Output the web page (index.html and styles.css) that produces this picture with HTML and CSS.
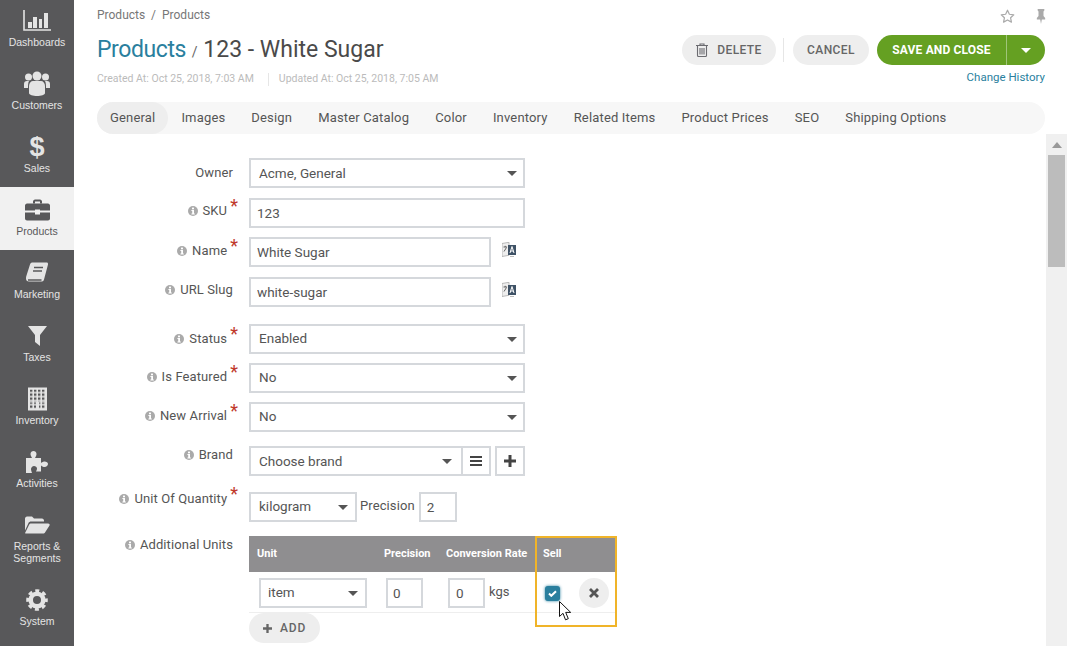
FILE: index.html
```html
<!DOCTYPE html>
<html lang="en">
<head>
  <meta charset="UTF-8" />
  <meta name="viewport" content="width=device-width, initial-scale=1.0"/>
  <title>Products - White Sugar</title>
  <link rel="stylesheet" href="styles.css">
</head>
<body>
  <svg class="defs" width="0" height="0">
    <symbol id="info" viewBox="0 0 10 10">
      <circle cx="5" cy="5" r="5" fill="#aaa"/>
      <rect x="4" y="1.6" width="2" height="1.7" fill="#fff"/>
      <path d="M3.4 4h2.6v3.6h.8v1H3.4v-1h.8V5h-.8z" fill="#fff"/>
    </symbol>
    <symbol id="translate" viewBox="0 0 14 15">
      <path d="M0 1.500l7-1.200v13l-7 1.200z" fill="#eee" stroke="#aaa" stroke-width=".8"/>
      <path d="M6 3h8v10H6z" fill="#3f5266"/>
      <path d="M8 11l2-6.500 2 6.500M8.800 9h2.400" fill="none" stroke="#fff"/>
      <path d="M1.500 5h3.500M3.200 3.800v1.200M2 9.500l2.500-4" fill="none" stroke="#555" stroke-width=".9"/>
      <path d="M8 14.500h4" stroke="#bbb"/>
    </symbol>
    <pattern id="windows" width="4" height="4" patternUnits="userSpaceOnUse" x="2" y="2">
      <rect width="2.400" height="2.400" fill="#58585a"/>
    </pattern>
  </svg>

  <nav class="sidebar">
    <a class="nav-item">
      <svg class="nav-icon" width="30" height="22" viewBox="0 0 30 22"><path d="M2 0v20h27" fill="none" stroke="currentColor" stroke-width="1.600"/><path d="M6 12h4v6H6zM11 7h4v11h-4zM17 9h3v9h-3zM22 3h4v15h-4z" fill="currentColor"/></svg>
      <span>Dashboards</span>
    </a>
    <a class="nav-item">
      <svg class="nav-icon" width="26" height="26" viewBox="0 0 26 26"><g fill="currentColor"><circle cx="4.500" cy="6" r="3.500"/><circle cx="13" cy="5" r="4.500"/><circle cx="21.500" cy="6" r="3.500"/><path d="M0 17v-4c0-2 1-3 3-3h2c-1 2-1 4-1 7zM26 17v-4c0-2-1-3-3-3h-2c1 2 1 4 1 7z"/><path d="M5 22v-7c0-3 2-5 4-5h8c2 0 4 2 4 5v7c0 2-4 3-8 3s-8-1-8-3z"/></g></svg>
      <span>Customers</span>
    </a>
    <a class="nav-item">
      <span class="nav-icon dollar">$</span>
      <span>Sales</span>
    </a>
    <a class="nav-item active">
      <svg class="nav-icon" width="25" height="21" viewBox="0 0 25 21"><g fill="currentColor"><path d="M8 4V2c0-1 1-2 2-2h5c1 0 2 1 2 2v2h-2V2h-5v2z"/><path d="M2 4h21c1 0 2 1 2 2v5H15v-1h-5v1H0V6c0-1 1-2 2-2z"/><path d="M0 13h10v2h5v-2h10v6c0 1-1 2-2 2H2c-1 0-2-1-2-2z"/></g></svg>
      <span>Products</span>
    </a>
    <a class="nav-item">
      <svg class="nav-icon" width="22" height="21" viewBox="0 0 22 21"><path d="M6 0h15c1 0 1 1 1 2l-4 15c-.3 1-1 2-2 2H3c-2 0-3-1-3-3 0-1 0-2 .5-3L4 2C4.300 1 5 0 6 0z" fill="currentColor"/><path d="M2 17.500h13.500M8 5h9M7 8.500h9" fill="none" stroke="#58585a" stroke-width="1.300"/></svg>
      <span>Marketing</span>
    </a>
    <a class="nav-item">
      <svg class="nav-icon" width="19" height="20" viewBox="0 0 19 20"><path d="M0 0h19l-7 9v11l-5-4V9z" fill="currentColor"/></svg>
      <span>Taxes</span>
    </a>
    <a class="nav-item">
      <svg class="nav-icon" width="19" height="23" viewBox="0 0 19 23"><rect width="19" height="23" fill="currentColor"/><rect x="2" y="2" width="15" height="12" fill="url(#windows)"/><path d="M2 15h6v6H2zM11 15h6v6h-6z" fill="url(#windows)"/></svg>
      <span>Inventory</span>
    </a>
    <a class="nav-item">
      <svg class="nav-icon" width="22" height="22" viewBox="0 0 22 22"><path d="M0 7h6C5 5 4.500 4 4.500 3 4.500 1 6 0 7.500 0S10.500 1 10.500 3c0 1-.5 2-1.500 4h6v5c1.500-1 2.500-1.500 3.500-1.500 2 0 3.500 1 3.500 2.500s-1.500 3-3.500 3c-1 0-2-.5-3.500-1.500v6H10c.8-1.500 1-2.300 1-3 0-1.500-1.500-2.500-3-2.500S5 16.500 5 18c0 .7.2 1.500 1 4H0z" fill="currentColor"/></svg>
      <span>Activities</span>
    </a>
    <a class="nav-item">
      <svg class="nav-icon" width="25" height="17" viewBox="0 0 25 17"><path d="M0 14V2C0 1 1 0 2 0h5l2 2h8c1 0 2 1 2 2v1H6C5 5 4 5.500 3.500 6.500z" fill="currentColor"/><path d="M6 7h17c1.500 0 2 1 1.500 2L20 16c-.4.600-1 1-2 1H1c-1 0-1-.5-.7-1L4 8.500C4.500 7.500 5 7 6 7z" fill="currentColor"/></svg>
      <span>Reports &amp; Segments</span>
    </a>
    <a class="nav-item">
      <svg class="nav-icon" width="22" height="22" viewBox="0 0 22 22"><g fill="none" stroke="currentColor"><circle cx="11" cy="11" r="6.300" stroke-width="4.600"/><circle cx="11" cy="11" r="9.300" stroke-width="3" stroke-dasharray="4 3.300" stroke-dashoffset="2"/></g></svg>
      <span>System</span>
    </a>
  </nav>

  <main class="main">
    <header class="page-head">
      <div class="head-left">
        <div class="breadcrumbs">Products &nbsp;/&nbsp; Products</div>
        <h1 class="title"><a>Products</a> <small>/</small> 123 - White Sugar</h1>
        <div class="meta">
          <span>Created At: Oct 25, 2018, 7:03 AM</span>
          <span class="meta-sep"></span>
          <span>Updated At: Oct 25, 2018, 7:05 AM</span>
        </div>
      </div>
      <div class="head-right">
        <div class="head-icons">
          <svg width="15" height="15" viewBox="0 0 16 16"><path d="M8 1.300l2 4.300 4.700.6-3.400 3.200.9 4.600L8 11.700l-4.200 2.300.9-4.600L1.300 6.200 6 5.600z" fill="none" stroke="#aaa" stroke-width="1.300" stroke-linejoin="round"/></svg>
          <svg width="10" height="15" viewBox="0 0 12 15" preserveAspectRatio="none"><path d="M2 0h8v1.500L9 2.500V7l2 2v1.500H7L6 15l-1-4.500H1V9l2-2V2.500L2 1.500z" fill="#aaa"/></svg>
        </div>
        <div class="actions">
          <button class="btn btn-delete">
            <svg width="12" height="14" viewBox="0 0 12 14"><path d="M4 2V1h4v1M0 2.500h12M1.500 3v9.500c0 .5.500 1 1 1h7c.5 0 1-.5 1-1V3M4 5v6.500M6 5v6.500M8 5v6.500" fill="none" stroke="#6b6b70" stroke-width="1.100"/></svg>
            DELETE
          </button>
          <span class="actions-sep"></span>
          <button class="btn btn-cancel">CANCEL</button>
          <div class="btn-split">
            <button class="btn btn-save">SAVE AND CLOSE</button>
            <button class="btn btn-more"><i class="caret caret-white"></i></button>
          </div>
        </div>
        <a class="history">Change History</a>
      </div>
    </header>

    <div class="tabs-wrap">
      <ul class="tabs">
        <li class="active">General</li>
        <li>Images</li>
        <li>Design</li>
        <li>Master Catalog</li>
        <li>Color</li>
        <li>Inventory</li>
        <li>Related Items</li>
        <li>Product Prices</li>
        <li>SEO</li>
        <li>Shipping Options</li>
      </ul>
    </div>

    <div class="content">
      <form class="form">
        <div class="form-row">
          <label class="label label-lg">Owner</label>
          <div class="select select-full"><span>Acme, General</span><i class="caret"></i></div>
        </div>
        <div class="form-row row-tight">
          <label class="label label-sm"><svg class="info"><use href="#info"/></svg>SKU<b class="req">*</b></label>
          <input class="input input-full" value="123">
        </div>
        <div class="form-row">
          <label class="label"><svg class="info"><use href="#info"/></svg>Name<b class="req">*</b></label>
          <input class="input input-name" value="White Sugar">
          <svg class="translate"><use href="#translate"/></svg>
        </div>
        <div class="form-row row-break">
          <label class="label label-sm"><svg class="info"><use href="#info"/></svg>URL Slug</label>
          <input class="input input-name" value="white-sugar">
          <svg class="translate"><use href="#translate"/></svg>
        </div>
        <div class="form-row row-tight">
          <label class="label label-lg"><svg class="info"><use href="#info"/></svg>Status<b class="req">*</b></label>
          <div class="select select-full select-high"><span>Enabled</span><i class="caret"></i></div>
        </div>
        <div class="form-row row-tight">
          <label class="label"><svg class="info"><use href="#info"/></svg>Is Featured<b class="req">*</b></label>
          <div class="select select-full select-high"><span>No</span><i class="caret"></i></div>
        </div>
        <div class="form-row row-gap-14">
          <label class="label"><svg class="info"><use href="#info"/></svg>New Arrival<b class="req">*</b></label>
          <div class="select select-full select-high"><span>No</span><i class="caret"></i></div>
        </div>
        <div class="form-row row-gap-16">
          <label class="label label-up"><svg class="info"><use href="#info"/></svg>Brand</label>
          <div class="select select-brand"><span>Choose brand</span><i class="caret"></i></div>
          <button type="button" class="icon-box box-list"><svg width="12" height="10" viewBox="0 0 12 10"><path d="M0 1h12M0 5h12M0 9h12" stroke="#444" stroke-width="2"/></svg></button>
          <button type="button" class="icon-box box-plus"><svg width="12" height="12" viewBox="0 0 12 12"><path d="M6 0v12M0 6h12" stroke="#444" stroke-width="3"/></svg></button>
        </div>
        <div class="form-row row-gap-14">
          <label class="label label-up-more"><svg class="info"><use href="#info"/></svg>Unit Of Quantity<b class="req">*</b></label>
          <div class="select select-unit select-high"><span>kilogram</span><i class="caret"></i></div>
          <span class="inline-text">Precision</span>
          <input class="input input-num" value="2">
        </div>
        <div class="form-row">
          <label class="label label-up"><svg class="info"><use href="#info"/></svg>Additional Units</label>
          <div class="units">
            <div class="units-head">
              <div class="first">Unit</div>
              <div>Precision</div>
              <div>Conversion Rate</div>
              <div>Sell</div>
            </div>
            <div class="units-row">
              <div class="first"><div class="select select-unit select-high"><span>item</span><i class="caret"></i></div></div>
              <div><input class="input input-num" value="0"></div>
              <div class="cell-rate"><input class="input input-num" value="0"><span class="kgs">kgs</span></div>
              <div class="cell-sell">
                <span class="checkbox"><svg width="9" height="7" viewBox="0 0 9 7"><path d="M1 3.500l2.300 2.300L8 1.200" fill="none" stroke="#fff" stroke-width="2"/></svg></span>
                <button type="button" class="remove"><svg width="10" height="10" viewBox="0 0 10 10"><path d="M1 1l8 8M9 1l-8 8" stroke="#555" stroke-width="2.800"/></svg></button>
              </div>
            </div>
            <button type="button" class="btn btn-add">
              <svg width="9" height="9" viewBox="0 0 10 10"><path d="M5 0v10M0 5h10" stroke="#666" stroke-width="2.600"/></svg>
              ADD
            </button>
            <div class="highlight"></div>
            <svg class="cursor" width="13" height="20" viewBox="0 0 13 20"><path d="M.5.5v15l3.500-3.200 2.500 6.500 2.800-1.100-2.600-6.300h5z" fill="#fff" stroke="#111" stroke-width="1"/></svg>
          </div>
        </div>
      </form>
      <div class="scrollbar">
        <i class="scroll-arrow"></i>
        <div class="scroll-thumb"></div>
      </div>
    </div>
  </main>
</body>
</html>
```

FILE: styles.css
```css
html, body {
  height: 100%;
}
body {
  margin: 0;
  height: 646px;
  overflow: hidden;
  display: flex;
  font-family: Roboto, Arial, sans-serif;
  font-size: 13px;
  color: #555;
  background: #fff;
}
.defs {
  position: absolute;
}

/* sidebar */
.sidebar {
  width: 74px;
  flex: none;
  background: #58585a;
  color: #e4e4e4;
  overflow: hidden;
}
.nav-item {
  display: flex;
  flex-direction: column;
  align-items: center;
  text-align: center;
  height: 63px;
  box-sizing: border-box;
  padding-top: 9px;
  font-family: "Liberation Sans", Arial, sans-serif;
  font-size: 10.5px;
  line-height: 12px;
}
.nav-item:first-child {
  height: 61px;
  padding-top: 7px;
}
.nav-item:nth-child(9) {
  height: 75px;
}
.nav-item.active {
  background: #f1f1f1;
  color: #58585a;
}
.nav-icon {
  height: 28px;
  flex: none;
  margin-bottom: 1px;
}
.dollar {
  font-size: 27px;
  line-height: 28px;
  font-weight: bold;
}

/* header */
.main {
  flex: 1;
  min-width: 0;
  display: flex;
  flex-direction: column;
  padding-left: 23px;
}
.page-head {
  display: flex;
  justify-content: space-between;
  height: 102px;
  padding-right: 23px;
  flex: none;
}
.breadcrumbs {
  font-size: 12px;
  line-height: 14px;
  color: #777;
  padding-top: 8px;
}
.title {
  margin: 12px 0 0;
  font-size: 23px;
  font-weight: 400;
  line-height: 32px;
  color: #4a4a4a;
}
.title a {
  color: #2a7f9e;
  letter-spacing: -.4px;
}
.title small {
  font-size: 14px;
  color: #666;
}
.meta {
  display: flex;
  align-items: center;
  font-size: 10.5px;
  line-height: 14px;
  color: #bbb;
  margin-top: 4px;
}
.meta-sep {
  width: 1px;
  height: 13px;
  background: #e6e6e6;
  margin: 0 10px 0 14px;
}
.head-right {
  display: flex;
  flex-direction: column;
  align-items: flex-end;
}
.head-icons {
  display: flex;
  gap: 21px;
  padding: 9px 0 0;
  height: 26px;
  box-sizing: border-box;
  margin-right: -1px;
}
.actions {
  display: flex;
  align-items: center;
  margin-top: 9px;
}
.btn {
  height: 30px;
  border: 0;
  border-radius: 15px;
  font-family: Roboto, Arial, sans-serif;
  font-size: 12px;
  font-weight: 500;
  letter-spacing: .4px;
  color: #666;
  background: #eee;
  padding: 0;
  display: inline-flex;
  align-items: center;
  justify-content: center;
}
.btn-delete {
  width: 94px;
  gap: 9px;
}
.actions-sep {
  width: 1px;
  height: 24px;
  background: #e6e6e6;
  margin: 0 9px 0 7px;
}
.btn-cancel {
  width: 76px;
  margin-right: 8px;
}
.btn-split {
  display: flex;
}
.btn-save {
  width: 129px;
  background: #65a022;
  color: #fff;
  border-radius: 15px 0 0 15px;
  font-weight: 700;
  letter-spacing: .15px;
}
.btn-more {
  width: 39px;
  background: #65a022;
  border-left: 1px solid #a0c57a;
  border-radius: 0 15px 15px 0;
}
.history {
  font-size: 11.5px;
  line-height: 14px;
  margin-top: 5px;
  color: #2a7f9e;
}

/* tabs */
.tabs-wrap {
  padding-right: 23px;
  flex: none;
}
.tabs {
  display: flex;
  list-style: none;
  margin: 0;
  padding: 0;
  height: 32px;
  background: #f7f7f7;
  border-radius: 16px;
}
.tabs li {
  padding: 0 13px;
  line-height: 31px;
  color: #555;
  letter-spacing: .17px;
}
.tabs li.active {
  background: #eee;
  border-radius: 16px;
}

/* form */
.content {
  flex: 1;
  min-height: 0;
  display: flex;
}
.form {
  flex: 1;
  padding-top: 24px;
}
.form-row {
  display: flex;
  align-items: flex-start;
  margin-bottom: 10px;
}
.row-tight {
  margin-bottom: 9px;
}
.row-break {
  margin-bottom: 17px;
}
.row-gap-14 {
  margin-bottom: 14px;
}
.row-gap-16 {
  margin-bottom: 16px;
}
.label {
  width: 136px;
  flex: none;
  margin-right: 16px;
  display: flex;
  align-items: center;
  justify-content: flex-end;
  line-height: 20px;
  padding-top: 4px;
  white-space: nowrap;
  letter-spacing: .1px;
}
.label-sm {
  padding-top: 3px;
}
.label-lg {
  padding-top: 5px;
}
.label-up {
  padding-top: 0;
  margin-top: -1px;
}
.label-up-more {
  padding-top: 0;
  margin-top: -3px;
}
.info {
  width: 10px;
  height: 10px;
  margin-right: 5px;
  flex: none;
}
.req {
  color: #c0392b;
  font-size: 18px;
  font-weight: 400;
  line-height: 10px;
  margin: -8px -5px 0 3px;
  align-self: flex-start;
  padding-top: 8px;
}
.input, .select {
  height: 30px;
  box-sizing: border-box;
  border: 2px solid #d5d8dc;
  background: #fff;
  font-family: Roboto, Arial, sans-serif;
  font-size: 13.5px;
  color: #555;
}
.input {
  padding: 0 6px;
  outline: none;
  display: block;
}
.select {
  display: flex;
  align-items: center;
  justify-content: space-between;
  padding: 0 6px 0 8px;
}
.select-high span {
  padding-bottom: 2px;
}
.select-full, .input-full {
  width: 276px;
}
.input-name {
  width: 242px;
}
.select-brand {
  width: 213px;
  border-right-width: 1px;
  padding-right: 9px;
}
.select-unit {
  width: 108px;
  padding-right: 7px;
}
.input-num {
  width: 38px;
}
.caret {
  width: 0;
  height: 0;
  border-left: 5px solid transparent;
  border-right: 5px solid transparent;
  border-top: 5px solid #555;
}
.caret-white {
  border-top-color: #fff;
}
.translate {
  width: 14px;
  height: 15px;
  margin: 5px 0 0 11px;
}
.icon-box {
  height: 30px;
  box-sizing: border-box;
  background: #fff;
  border: 2px solid #d5d8dc;
  padding: 0;
  display: flex;
  align-items: center;
  justify-content: center;
}
.box-list {
  width: 29px;
  border-left-width: 1px;
  margin-right: 4px;
}
.box-plus {
  width: 30px;
}
.inline-text {
  line-height: 28px;
  margin: 0 4px 0 3px;
  letter-spacing: .1px;
}

/* additional units table */
.units {
  position: relative;
  width: 368px;
}
.units-head, .units-row {
  display: grid;
  grid-template-columns: 129px 62px 97px 80px;
}
.units-head {
  height: 36px;
  background: #8f8e90;
  color: #fff;
  font-size: 11px;
  font-weight: 700;
  line-height: 36px;
}
.units-head div {
  padding-left: 6px;
}
.units-head .first {
  padding-left: 8px;
}
.units-row {
  height: 41px;
  box-sizing: border-box;
  padding-top: 6px;
  border-bottom: 1px solid #eee;
}
.units-row div {
  padding-left: 8px;
}
.units-row .first {
  padding-left: 10px;
}
.units-row div.select {
  padding-left: 7px;
}
.units-row .input-num {
  width: 37px;
  padding-left: 5px;
}
.cell-rate {
  display: flex;
}
.cell-rate .input-num {
  padding-left: 6px;
}
.kgs {
  line-height: 28px;
  margin-left: 4px;
  font-size: 13px;
}
.cell-sell {
  display: flex;
  align-items: center;
  height: 30px;
}
.checkbox {
  width: 15px;
  height: 15px;
  border-radius: 3px;
  background: #2a7f9e;
  box-shadow: 0 0 3px #2a7f9e;
  display: flex;
  align-items: center;
  justify-content: center;
  margin-right: 19px;
}
.remove {
  width: 30px;
  height: 30px;
  border: 0;
  border-radius: 50%;
  background: #eee;
  padding: 0;
  display: flex;
  align-items: center;
  justify-content: center;
}
.btn-add {
  width: 71px;
  gap: 8px;
  letter-spacing: .8px;
}
.highlight {
  position: absolute;
  left: 286px;
  top: 0;
  width: 82px;
  height: 91px;
  box-sizing: border-box;
  border: 2px solid #f0b429;
}
.cursor {
  position: absolute;
  left: 310px;
  top: 65px;
}

/* scrollbar */
.scrollbar {
  width: 21px;
  margin-right: 1px;
  flex: none;
  background: #f0f0f0;
  display: flex;
  flex-direction: column;
  align-items: center;
}
.scroll-arrow {
  width: 0;
  height: 0;
  margin-top: 8px;
  border-left: 5px solid transparent;
  border-right: 5px solid transparent;
  border-bottom: 6px solid #999;
}
.scroll-thumb {
  width: 17px;
  height: 112px;
  margin-top: 7px;
  background: #bcbcbc;
}
```
